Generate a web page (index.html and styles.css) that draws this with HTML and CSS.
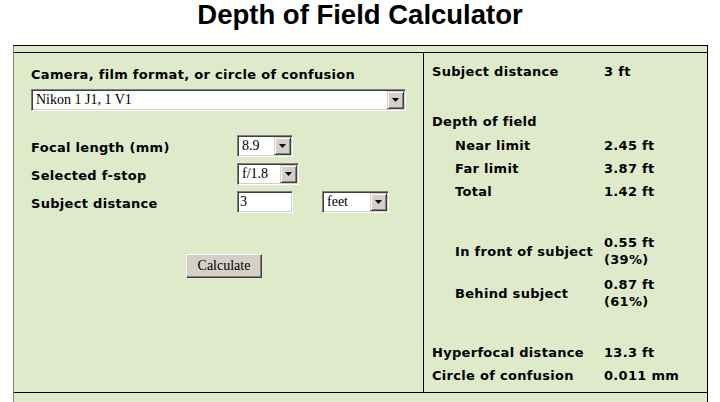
FILE: index.html
```html
<!DOCTYPE html>
<html lang="en">
<head>
<meta charset="utf-8">
<title>Depth of Field Calculator</title>
<link rel="stylesheet" href="styles.css">
</head>
<body>
<h1 class="title">Depth of Field Calculator</h1>
<div class="calc">
  <div class="strip"></div>
  <div class="main">
    <div class="inputs">
      <div class="field-label">Camera, film format, or circle of confusion</div>
      <div class="combo combo-wide"><span class="combo-val">Nikon 1 J1, 1 V1</span><span class="combo-btn"><svg width="7" height="4" viewBox="0 0 7 4"><path d="M0 0H7L3.5 4Z" fill="#000"/></svg></span></div>
      <div class="params">
        <div class="label">Focal length (mm)</div>
        <div class="ctrls"><div class="combo combo-fl"><span class="combo-val">8.9</span><span class="combo-btn"><svg width="7" height="4" viewBox="0 0 7 4"><path d="M0 0H7L3.5 4Z" fill="#000"/></svg></span></div></div>
        <div class="label">Selected f-stop</div>
        <div class="ctrls"><div class="combo combo-fs"><span class="combo-val">f/1.8</span><span class="combo-btn"><svg width="7" height="4" viewBox="0 0 7 4"><path d="M0 0H7L3.5 4Z" fill="#000"/></svg></span></div></div>
        <div class="label">Subject distance</div>
        <div class="ctrls"><div class="textbox">3</div><div class="combo combo-unit"><span class="combo-val">feet</span><span class="combo-btn"><svg width="7" height="4" viewBox="0 0 7 4"><path d="M0 0H7L3.5 4Z" fill="#000"/></svg></span></div></div>
      </div>
      <div class="actions"><button class="btn" type="button">Calculate</button></div>
    </div>
    <div class="results">
      <div class="row r-first"><span>Subject distance</span><span>3 ft</span></div>
      <div class="row r-dof"><span>Depth of field</span><span></span></div>
      <div class="row r-near"><span class="ind">Near limit</span><span>2.45 ft</span></div>
      <div class="row r-std"><span class="ind">Far limit</span><span>3.87 ft</span></div>
      <div class="row r-std"><span class="ind">Total</span><span>1.42 ft</span></div>
      <div class="row r-front"><span class="ind">In front of subject</span><span>0.55 ft<br>(39%)</span></div>
      <div class="row r-behind"><span class="ind">Behind subject</span><span>0.87 ft<br>(61%)</span></div>
      <div class="row r-hyper"><span>Hyperfocal distance</span><span>13.3 ft</span></div>
      <div class="row r-std"><span>Circle of confusion</span><span>0.011 mm</span></div>
    </div>
  </div>
  <div class="strip-bottom"></div>
</div>
</body>
</html>
```
FILE: styles.css
```css
html, body {
  margin: 0;
  padding: 0;
  background: #fff;
}
body {
  font-family: "DejaVu Sans", Verdana, sans-serif;
  color: #000;
}
.title {
  margin: 0;
  padding: 0 0 15px;
  height: 30px;
  font-family: "Liberation Sans", Arial, sans-serif;
  font-size: 27.5px;
  line-height: 30px;
  font-weight: bold;
  text-align: center;
}
.calc {
  margin-left: 13px;
  width: 693px;
  border-top: 1px solid #000;
  border-left: 1px solid #808080;
  border-right: 1px solid #000;
  background: #dfeacb;
}
.strip {
  height: 6px;
  border-bottom: 1px solid #000;
}
.main {
  display: grid;
  grid-template-columns: 410px 1fr;
  height: 339px;
  border-bottom: 1px solid #000;
}
.strip-bottom {
  height: 20px;
}
.inputs {
  border-right: 1px solid #000;
  padding: 13px 6px 0 17px;
  font-size: 13px;
  font-weight: bold;
  line-height: 17px;
  letter-spacing: 0.3px;
}
.combo {
  display: flex;
  box-sizing: border-box;
  height: 22px;
  background: #fff;
  border: 1px solid;
  border-color: #808080 #fff #fff #808080;
  box-shadow: inset 1px 1px #404040, inset -1px -1px #d4d0c8;
  padding: 1px;
  letter-spacing: 0;
}
.combo-val {
  flex: 1;
  font-family: "Liberation Serif", "Times New Roman", serif;
  font-size: 14px;
  font-weight: normal;
  line-height: 18px;
  padding-left: 3px;
  white-space: nowrap;
  overflow: hidden;
}
.combo-btn {
  box-sizing: border-box;
  width: 17px;
  display: flex;
  align-items: center;
  justify-content: center;
  background: #d4d0c8;
  border: 1px solid;
  border-color: #d4d0c8 #404040 #404040 #d4d0c8;
  box-shadow: inset 1px 1px #fff, inset -1px -1px #808080;
}
.combo-wide {
  margin-top: 6px;
  width: 375px;
}
.params {
  margin-top: 24px;
  display: grid;
  grid-template-columns: 206px auto;
  grid-auto-rows: 22px;
  row-gap: 6px;
}
.label {
  padding-top: 4px;
}
.ctrls {
  display: flex;
  gap: 29px;
}
.combo-fl { width: 56px; }
.combo-fs { width: 62px; }
.combo-unit { width: 67px; }
.textbox {
  box-sizing: border-box;
  width: 56px;
  height: 22px;
  background: #fff;
  border: 1px solid;
  border-color: #808080 #fff #fff #808080;
  box-shadow: inset 1px 1px #404040, inset -1px -1px #d4d0c8;
  font-family: "Liberation Serif", "Times New Roman", serif;
  font-size: 14px;
  font-weight: normal;
  line-height: 20px;
  padding-left: 2px;
  letter-spacing: 0;
}
.actions {
  margin-top: 41px;
  text-align: center;
}
.btn {
  box-sizing: border-box;
  width: 76px;
  height: 24px;
  margin: 0;
  padding: 0;
  background: #d4d0c8;
  border: 1px solid;
  border-color: #fff #404040 #404040 #fff;
  box-shadow: inset -1px -1px #808080;
  font-family: "Liberation Serif", "Times New Roman", serif;
  font-size: 14px;
  letter-spacing: 0;
  color: #000;
}
.results {
  padding: 10px 8px 0;
  font-size: 13px;
  font-weight: bold;
  line-height: 17px;
  letter-spacing: 0.3px;
}
.row {
  display: grid;
  grid-template-columns: 172px auto;
  align-items: center;
}
.ind {
  padding-left: 23px;
}
.r-dof { margin-top: 33px; }
.r-near { margin-top: 7px; }
.r-std { margin-top: 6px; }
.r-front { margin-top: 34px; }
.r-behind { margin-top: 8px; }
.r-hyper { margin-top: 34px; }
```
